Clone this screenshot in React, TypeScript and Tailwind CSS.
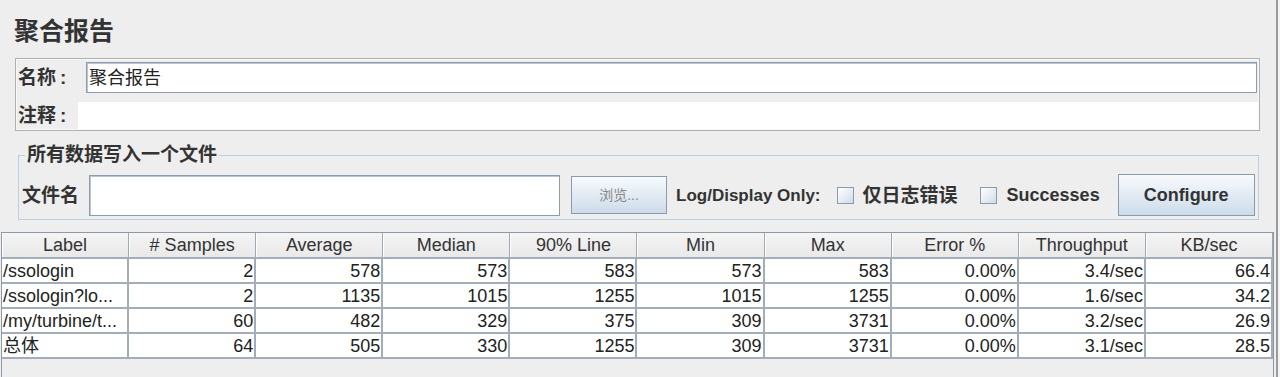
import React from "react";

const FONT = '"Liberation Sans", "Noto Sans CJK SC", sans-serif';

const headers = ["Label", "# Samples", "Average", "Median", "90% Line", "Min", "Max", "Error %", "Throughput", "KB/sec"];
const rows = [
  ["/ssologin", "2", "578", "573", "583", "573", "583", "0.00%", "3.4/sec", "66.4"],
  ["/ssologin?lo...", "2", "1135", "1015", "1255", "1015", "1255", "0.00%", "1.6/sec", "34.2"],
  ["/my/turbine/t...", "60", "482", "329", "375", "309", "3731", "0.00%", "3.2/sec", "26.9"],
  ["总体", "64", "505", "330", "1255", "309", "3731", "0.00%", "3.1/sec", "28.5"],
];

function Checkbox() {
  return (
    <div className="w-[17px] h-[17px] border border-[#8d9aa8] bg-gradient-to-br from-[#ffffff] to-[#cfdcea] shrink-0" />
  );
}

export default function App() {
  return (
    <div
      className="w-[1280px] h-[377px] bg-[#eeeeee] flex overflow-hidden text-[#333333]"
      style={{ fontFamily: FONT }}
    >
      <div className="w-[1276px] flex flex-col">
        {/* Title */}
        <div className="pl-[14px] pt-[15px] h-[58px] text-[25px] leading-[32px] font-bold text-[#333333]">
          聚合报告
        </div>

        {/* Name / comments box */}
        <div className="ml-[15px] w-[1245px] h-[73px] border border-[#b0b0b0] shadow-[inset_0_0_0_1px_#f8f8f8] flex flex-col">
          <div className="flex items-center mt-[3px] h-[31px]">
            <div className="pl-[2px] w-[70px] text-[19px] font-bold leading-none">名称<span className="ml-[4px]">:</span></div>
            <div className="flex-1 mr-[2px] h-[31px] bg-white border border-[#8e9cab] shadow-[inset_1px_1px_0_0_#b8c6d4] flex items-center pl-[2px] text-[18px] leading-none text-[#222]">
              聚合报告
            </div>
          </div>
          <div className="flex items-stretch mt-[9px] flex-1 mb-[1px]">
            <div className="pl-[2px] w-[62px] text-[19px] font-bold leading-none flex items-center">注释<span className="ml-[4px]">:</span></div>
            <div className="flex-1 bg-white mr-[1px]" />
          </div>
        </div>

        {/* Write to file group */}
        <fieldset className="ml-[18px] w-[1241px] mt-[13px] border border-[#b8cfe5] px-[3px] pb-[2px]">
          <legend className="ml-[3px] px-[2px] text-[19px] font-bold leading-[22px] text-[#333]">
            所有数据写入一个文件
          </legend>
          <div className="flex items-center h-[44px] mt-[7px]">
            <div className="text-[19px] font-bold leading-none">文件名</div>
            <div className="ml-[10px] w-[471px] h-[41px] bg-white border border-[#8e9cab] shadow-[inset_1px_1px_0_0_#b8c6d4]" />
            <div className="ml-[11px] w-[96px] h-[38px] border border-[#8d9aa7] bg-gradient-to-b from-[#f7fafd] to-[#cddcea] flex items-center justify-center text-[14px] text-[#888] leading-none">
              浏览...
            </div>
            <div className="ml-[9px] text-[17px] font-bold leading-none">Log/Display Only:</div>
            <div className="ml-[16px]"><Checkbox /></div>
            <div className="ml-[9px] text-[19px] font-bold leading-none">仅日志错误</div>
            <div className="ml-[22px]"><Checkbox /></div>
            <div className="ml-[10px] text-[18px] font-bold leading-none">Successes</div>
            <div className="ml-[18px] w-[137px] h-[42px] border border-[#8d9aa7] bg-gradient-to-b from-[#f7fafd] to-[#cddcea] flex items-center justify-center text-[18px] font-bold leading-none text-[#333]">
              Configure
            </div>
          </div>
        </fieldset>

        {/* Table pane */}
        <div className="ml-[1px] mt-[12px] w-[1273px] flex-1 border-l border-r border-t border-[#8e99a6] flex flex-col">
          <div className="grid grid-cols-10 h-[26px] bg-gradient-to-b from-[#f4f4f4] to-[#e9e9e9] border-b-2 border-[#a4aeb9]">
            {headers.map((h, i) => (
              <div
                key={i}
                className="flex items-center justify-center text-[18px] leading-none border-r border-[#9ea9b5] shadow-[inset_1px_0_0_0_#ffffff]"
              >
                {h}
              </div>
            ))}
          </div>
          {rows.map((r, ri) => (
            <div key={ri} className="grid grid-cols-10 h-[25px]">
              {r.map((c, ci) => (
                <div
                  key={ci}
                  className={
                    "bg-white border-r-2 border-b-2 border-[#a3adb9] flex items-center text-[18px] leading-none whitespace-nowrap overflow-hidden text-[#222] " +
                    (ci === 0 ? "justify-start pl-[1px]" : "justify-end pr-[1px]")
                  }
                >
                  {c}
                </div>
              ))}
            </div>
          ))}
          <div className="flex-1" />
        </div>
      </div>
      <div className="w-[2px] bg-[#9b9b9b]" />
      <div className="flex-1 bg-[#f4f4f4]" />
    </div>
  );
}
